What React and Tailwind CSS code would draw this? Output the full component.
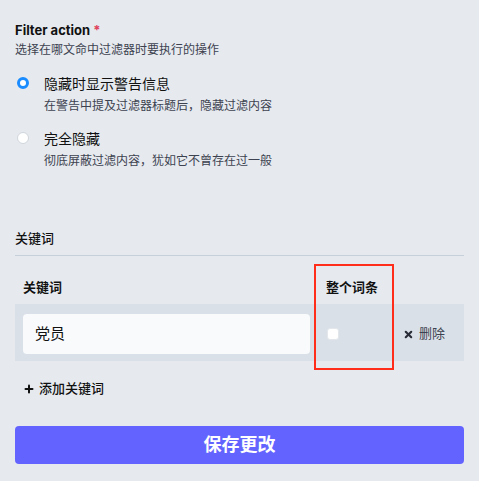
import { Plus, X } from "lucide-react";

const font = { fontFamily: 'Inter, "Noto Sans CJK SC", sans-serif' };

const RadioOption = ({ checked, label, hint }) => (
  <label className="flex gap-[15px] items-start">
    <span
      className={
        checked
          ? "mt-[3px] w-[12px] h-[12px] rounded-full border-[3.5px] border-[#1a8cff] bg-white shrink-0"
          : "mt-[3px] w-[12px] h-[12px] rounded-full border border-[#d0d6dd] bg-white shrink-0"
      }
    />
    <div>
      <div className="text-[14px] leading-5 text-[#111]">{label}</div>
      <div className="mt-[3px] text-[12px] leading-[18px] text-[#3d4250]">{hint}</div>
    </div>
  </label>
);

export default function App() {
  return (
    <div
      className="w-[479px] h-[481px] bg-[#e6eaef] px-[15px] pt-[20px] overflow-hidden"
      style={font}
    >
      {/* Filter action */}
      <div className="text-[13px] leading-5 font-bold text-[#111]">
        Filter action <span className="text-[#df405a]">*</span>
      </div>
      <div className="mt-[1px] text-[12px] leading-[18px] text-[#3d4250]">
        选择在哪文命中过滤器时要执行的操作
      </div>

      <div className="mt-[15px] pl-[2px] flex flex-col gap-[14px]">
        <RadioOption
          checked
          label="隐藏时显示警告信息"
          hint="在警告中提及过滤器标题后，隐藏过滤内容"
        />
        <RadioOption label="完全隐藏" hint="彻底屏蔽过滤内容，犹如它不曾存在过一般" />
      </div>

      {/* Keywords */}
      <div className="mt-[59px] pb-[8px] border-b border-[#c5d0da] text-[13px] leading-[18px] font-medium text-[#111]">
        关键词
      </div>

      <div className="relative mt-[22px]">
        <div className="grid grid-cols-[303px_78px_1fr] text-[13px] font-bold text-[#111] leading-[18px] pb-[8px]">
          <div className="px-[8px]">关键词</div>
          <div className="px-[8px]">整个词条</div>
          <div />
        </div>
        <div className="grid grid-cols-[303px_78px_1fr] items-center bg-[#d9e0e7] pt-[10px] pb-[7px]">
          <div className="pl-[8px] pr-[8px]">
            <div className="h-[40px] rounded-[4px] bg-[#f9fafb] flex items-center px-[12px] text-[15px] text-[#111]">
              党员
            </div>
          </div>
          <div className="pl-[9px]">
            <div className="w-[12px] h-[12px] rounded-[3px] bg-white border border-[#e3e7ec]" />
          </div>
          <div className="pl-[7px] flex items-center gap-[5px] text-[13px] text-[#3d4250]">
            <X size={11} strokeWidth={4.5} className="text-[#282c37]" />
            删除
          </div>
        </div>
        {/* annotation box */}
        <div className="absolute left-[299px] top-[-14px] w-[80px] h-[106px] border-2 border-[#ff2d1a]" />
      </div>

      <div className="mt-[18px] pl-[8px] flex items-center gap-[4px] text-[13px] font-medium text-[#111]">
        <Plus size={12} strokeWidth={4} />
        添加关键词
      </div>

      <button className="mt-[27px] w-full h-[38px] rounded-[4px] bg-[#6364ff] text-white text-[18px] font-bold">
        保存更改
      </button>
    </div>
  );
}
